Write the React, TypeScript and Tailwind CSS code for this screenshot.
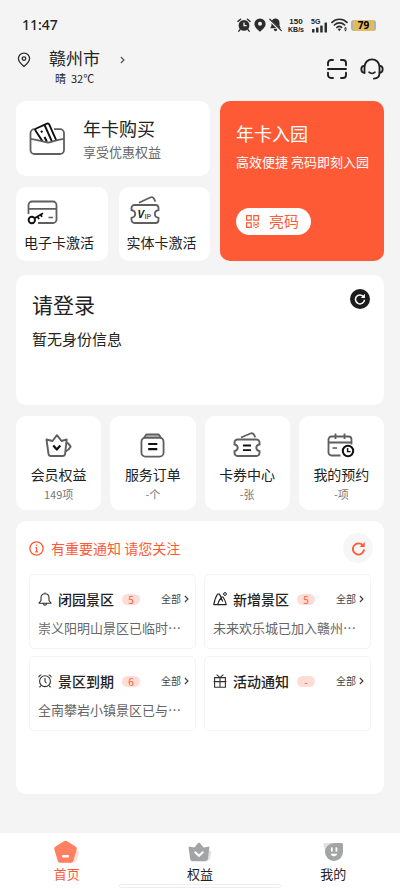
import React from 'react';

type IconProps = { className?: string };

const STROKE = '#5f5f5f';

/* ---------- ステータスバー ---------- */

const StatusAlarm = () => (
    <svg width="14" height="14" viewBox="0 0 14 14" fill="none">
        <circle cx="7" cy="7.4" r="5.4" fill="#2d2d2d" />
        <path d="M1 3.4 3.6 1.2M13 3.4 10.4 1.2M3 11.6l-1.2 1.6M11 11.6l1.2 1.6" stroke="#2d2d2d" strokeWidth="1.4" strokeLinecap="round" />
        <path d="M7 4.4v3.3h2.6" stroke="#f4f4f4" strokeWidth="1.3" />
    </svg>
);

const StatusPin = () => (
    <svg width="12" height="14" viewBox="0 0 12 14">
        <path d="M6 .4A5.6 5.6 0 0 0 .4 5.9C.4 9 3.6 11.4 6 13.7 8.4 11.4 11.6 9 11.6 5.9A5.6 5.6 0 0 0 6 .4Z" fill="#2d2d2d" />
        <circle cx="6" cy="5.7" r="2" fill="#f4f4f4" />
    </svg>
);

const StatusMute = () => (
    <svg width="13" height="14" viewBox="0 0 13 14" fill="none">
        <path d="M6.5.5C4 .5 2.500 2.300 2.500 4.700v3L1.200 10.200h10.600L10.500 7.700v-3C10.500 2.300 9 .5 6.500.5ZM4.800 11h3.400c-.2 1.500-.8 2.200-1.700 2.200S5 12.500 4.800 11Z" fill="#2d2d2d" />
        <path d="M.6 2 12 13" stroke="#f4f4f4" strokeWidth="2.4" />
        <path d="M.8 1.2 12.4 12.6" stroke="#2d2d2d" strokeWidth="1.2" strokeLinecap="round" />
    </svg>
);

const StatusWifi = () => (
    <svg width="17" height="14" viewBox="0 0 17 14" fill="none">
        <path d="M1 4.400c4-4.200 11-4.200 15 0M3.400 7c2.800-2.900 7.400-2.900 10.200 0M5.900 9.500c1.300-1.300 3.400-1.300 4.700-.2" stroke="#2d2d2d" strokeWidth="1.7" strokeLinecap="round" />
        <path d="M6.600 11.100 8.400 13.200l1.700-2.100c-1-.8-2.500-.8-3.500 0Z" fill="#2d2d2d" />
        <path d="M14.500 8.800 16 10.800h-3ZM14.500 13.400l-1.500-2h3Z" fill="#2d2d2d" />
    </svg>
);

const StatusBar = () => (
    <div className="flex h-[50px] items-center justify-between pr-6 pl-[22px]">
        <span className="font-['Noto_Sans'] text-[14px] leading-5 font-medium">11:47</span>
        <div className="flex items-center gap-[3px]">
            <StatusAlarm />
            <StatusPin />
            <StatusMute />
            <div className="ml-[3px] flex w-4 flex-col items-center font-['Liberation_Sans'] font-bold">
                <span className="text-[8px] leading-[9px]">150</span>
                <span className="text-[7px] leading-[8px]">KB/s</span>
            </div>
            <div className="relative ml-1 h-[15px] w-[17px]">
                <span className="absolute top-0 left-0 font-['Liberation_Sans'] text-[7px] leading-[7px] font-bold">5G</span>
                <svg className="h-full w-full" viewBox="0 0 17 15" fill="#2d2d2d">
                    <rect x="1" y="11" width="2.5" height="3.5" rx=".6" />
                    <rect x="5" y="9.5" width="2.5" height="5" rx=".6" />
                    <rect x="9.2" y="7.5" width="2.5" height="7" rx=".6" />
                    <rect x="13.5" y="4.5" width="2.5" height="10" rx=".6" />
                </svg>
            </div>
            <StatusWifi />
            <span className="flex h-[11px] w-[25px] items-center justify-center rounded-[3px] border-x-2 border-[#b5b2a8] bg-[#e0bb5f] font-['Noto_Sans'] text-[10px] leading-[11px] font-bold text-black">
                79
            </span>
        </div>
    </div>
);

/* ---------- アイコン ---------- */

const PinIcon = () => (
    <svg width="14" height="16" viewBox="0 0 14 16" fill="none" stroke="#2b2b2b" strokeWidth="1.3">
        <path d="M7 1.200c-3.200 0-5.600 2.300-5.600 5.300 0 3.300 3 5.700 5.600 8 2.600-2.300 5.600-4.700 5.600-8 0-3-2.400-5.300-5.600-5.300Z" />
        <circle cx="7" cy="6.6" r="1.8" />
    </svg>
);

const Chevron = ({ className }: IconProps) => (
    <svg className={className} viewBox="0 0 6 10" fill="none" stroke="currentColor" strokeWidth="1.5">
        <path d="M1 1.200 4.800 5 1 8.800" />
    </svg>
);

const ScanIcon = () => (
    <svg width="20" height="20" viewBox="0 0 20 20" fill="none" stroke="#202020" strokeWidth="1.9" strokeLinecap="round">
        <path d="M1 6.200V4a3 3 0 0 1 3-3h2M14 1h2a3 3 0 0 1 3 3v2.200M19 13.800V16a3 3 0 0 1-3 3h-2M6 19H4a3 3 0 0 1-3-3v-2.200M1 10h18" />
    </svg>
);

const HeadsetIcon = () => (
    <svg width="24" height="22" viewBox="0 0 24 22" fill="none" stroke="#202020" strokeWidth="1.8" strokeLinecap="round" strokeLinejoin="round">
        <path d="M4.500 14.800V8.800a7.500 7.500 0 0 1 15 0v6.400c0 3.500-2 5.200-5.600 5.400" />
        <path d="M4.500 7.600c-1.900.2-3.200 1.200-3.200 3.600s1.300 3.400 3.200 3.600M19.500 7.600c1.900.2 3.200 1.200 3.200 3.600s-1.300 3.400-3.200 3.600" />
        <path d="M9 14.200c1.600 1.500 4.400 1.500 6 0" strokeWidth="1.6" />
    </svg>
);

const WalletIcon = () => (
    <svg width="37" height="34" viewBox="0 0 37 34" fill="none">
        <path d="M6.500 7.200h-1A4 4 0 0 0 1.500 11.200V28a4 4 0 0 0 4 4H31a4 4 0 0 0 4-4V11.200a4 4 0 0 0-4-4h-6" stroke={STROKE} strokeWidth="1.8" />
        <path d="M13.500 19 6.600 8.800c-.6-.9-.4-1.800.6-2.300L18 1.600c.9-.4 1.700-.1 2.200.8l7.300 16.400-9 2.400Z" fill="#fff" />
        <path d="M13.500 19.200 6.600 8.800c-.6-.9-.4-1.800.6-2.300L18 1.600c.9-.4 1.700-.1 2.200.8l7.300 16.400M15.800 3.500l7.200 16.200" stroke="#111" strokeWidth="1.900" />
        <path d="m12.200 8.800 1 1.800M15.500 15l2.400 4.800" stroke="#111" strokeWidth="2" />
        <path d="M1.500 16.800c6 .6 10.500 2.400 17.500 3.800 6-1.400 10-3.200 16-3.800" stroke={STROKE} strokeWidth="1.8" />
    </svg>
);

const CardKeyIcon = () => (
    <svg width="31" height="25" viewBox="0 0 31 25" fill="none">
        <path d="M1.500 14V5a3.500 3.500 0 0 1 3.500-3.500h21A3.500 3.500 0 0 1 29.500 5v14.500A3.500 3.500 0 0 1 26 23H11M1.500 8.800h28" stroke={STROKE} strokeWidth="1.8" />
        <path d="M21.500 17.500h4.500" stroke={STROKE} strokeWidth="1.5" />
        <circle cx="4.8" cy="20" r="3.2" stroke="#111" strokeWidth="1.9" />
        <path d="m7.500 18.200 8.500-5M10.500 16.500l1.500 2.600M13.600 14.500l1.300 2.400" stroke="#111" strokeWidth="1.8" />
    </svg>
);

const VipIcon = () => (
    <svg width="31" height="29" viewBox="0 0 31 29" fill="none">
        <path d="M9 6.800 20.200 1.500c1.600-.7 2.900-.3 3.800 1.200l1.400 3" stroke={STROKE} strokeWidth="1.8" />
        <path d="M4.500 9h21a3 3 0 0 1 3 3v2.200c-2.500.5-3.700 1.800-3.700 3.800s1.200 3.300 3.700 3.800V24a3 3 0 0 1-3 3h-21a3 3 0 0 1-3-3v-2.200c2.500-.5 3.700-1.800 3.700-3.800s-1.200-3.300-3.700-3.800V12a3 3 0 0 1 3-3Z" stroke={STROKE} strokeWidth="1.8" />
        <text x="7.5" y="22" fontFamily="Liberation Sans" fontWeight="bold" fontStyle="italic" fontSize="10" fill="#111">V</text>
        <text x="14.5" y="22.5" fontFamily="Liberation Sans" fontWeight="bold" fontSize="7" fill={STROKE}>IP</text>
    </svg>
);

const QrIcon = () => (
    <svg width="13" height="13" viewBox="0 0 13 13" fill="none" stroke="#ff5a36" strokeWidth="1.2">
        <path d="M.6.6h4.600v4.600H.6ZM7.800.6h4.600v4.600H7.800ZM.6 7.800h4.600v4.600H.6Z" />
        <path d="M7.200 7.800h2M10.800 7.800h2M9 9.600h2M7.200 11h1.600M10.800 11.200h2M9 12.600h1.800M8 9v1.200M12.200 8.500v1.300" />
    </svg>
);

const ReloadIcon = ({ className }: IconProps) => (
    <svg className={className} viewBox="0 0 16 16" fill="none" stroke="currentColor">
        <path d="M13 5.200A6 6 0 1 0 14 9" strokeWidth="2" />
        <path d="M14.600 1v5.500H9.200Z" fill="currentColor" stroke="none" />
    </svg>
);

const CrownCup = () => (
    <svg width="28" height="25" viewBox="0 0 28 25" fill="none" strokeLinejoin="round">
        <path d="M1.500 6.500 7.500 8 12 2.200 16.500 8l5.200-1.500-1.600 14.300a2.500 2.500 0 0 1-2.500 2.200H6a2.500 2.500 0 0 1-2.500-2.200Z" stroke={STROKE} strokeWidth="1.9" />
        <path d="M21.500 9.500c1 .2 2.200 1.300 4.200 4-1.400 2.600-3 4-5 5" stroke={STROKE} strokeWidth="1.9" />
        <path d="m8.300 12.500 3.500 4 3.500-4" stroke="#111" strokeWidth="2.2" />
    </svg>
);

const OrderIcon = () => (
    <svg width="25" height="25" viewBox="0 0 26 26" fill="none">
        <path d="M6.500 1.500h13l3 4.500h-19Z" fill="#aaa" stroke={STROKE} strokeWidth="1.8" strokeLinejoin="round" />
        <rect x="1.500" y="5" width="23" height="19.5" rx="4" fill="#fff" stroke={STROKE} strokeWidth="1.9" />
        <path d="M8.500 11.500h9.500M8.500 16.800h9.500" stroke="#111" strokeWidth="2.2" />
    </svg>
);

const CouponIcon = () => (
    <svg width="28" height="26" viewBox="0 0 28 26" fill="none">
        <path d="M8 5.500 17.500 1.500c1.500-.6 2.600-.2 3.400 1l1.400 2.800" stroke={STROKE} strokeWidth="1.8" />
        <path d="M4.500 7.500h19a3 3 0 0 1 3 3v2c-2.200.4-3.200 1.600-3.200 3.300s1 2.900 3.200 3.300V21a3 3 0 0 1-3 3h-19a3 3 0 0 1-3-3v-1.900c2.200-.4 3.200-1.600 3.200-3.300s-1-2.900-3.200-3.300v-2a3 3 0 0 1 3-3Z" stroke={STROKE} strokeWidth="1.9" />
        <path d="M10 13.500h8M10 18.200h8" stroke="#111" strokeWidth="1.8" />
    </svg>
);

const BookingIcon = () => (
    <svg width="28" height="25" viewBox="0 0 28 25" fill="none">
        <path d="M13.500 22.500H4.500a3 3 0 0 1-3-3V6.500a3 3 0 0 1 3-3h17a3 3 0 0 1 3 3v5M1.500 9.500h23M8.500.5v5.500M17.500.5v5.500" stroke={STROKE} strokeWidth="1.8" />
        <path d="M5.500 15h4.500" stroke={STROKE} strokeWidth="1.6" />
        <circle cx="21" cy="18" r="5.2" stroke="#111" strokeWidth="2" />
        <path d="M20.600 15v3.600h3" stroke="#111" strokeWidth="1.4" />
    </svg>
);

const InfoIcon = () => (
    <svg width="15" height="15" viewBox="0 0 15 15" fill="none" stroke="#ff5a36">
        <circle cx="7.5" cy="7.5" r="6.6" strokeWidth="1.3" />
        <path d="M7.500 3.600v1.500M6.400 6.700h1.200v4M6.200 10.900h2.800" strokeWidth="1.2" />
    </svg>
);

const BellIcon = () => (
    <svg width="14" height="14" viewBox="0 0 14 14" fill="none" stroke="#333" strokeWidth="1.1" strokeLinejoin="round">
        <path d="M7 1.700c-2.500 0-4 1.800-4 4.100v2.700L1 11.200h12L11 8.500V5.800c0-2.300-1.500-4.100-4-4.100ZM7 .4v1.300M5.300 11.400c.2 1.300.8 1.900 1.700 1.900s1.500-.6 1.700-1.900" />
    </svg>
);

const MountainIcon = () => (
    <svg width="14" height="14" viewBox="0 0 14 14" fill="none" stroke="#222" strokeWidth="1.2" strokeLinejoin="round">
        <path d="M4.600 12.600H.8C1.600 8 2.800 4.600 4.600 2h1.600c1 1 1.500 2.200 1.900 3.600M4.600 12.600h8.600C12.600 9.600 11.600 7.200 10 5H8.800c-2 2-3.200 4.600-4.200 7.600ZM8.200 6.200l1.600 3.200" />
        <circle cx="12" cy="2" r="1.400" strokeWidth="1" />
    </svg>
);

const ClockIcon = () => (
    <svg width="14" height="14" viewBox="0 0 14 14" fill="none" stroke="#333" strokeWidth="1.1">
        <circle cx="7" cy="7.2" r="5.4" />
        <path d="M7 4v3.600l1.500 1.600M.6 3.400C1 2 2 1 3.300.7M13.400 3.400C13 2 12 1 10.700.7M2.800 11.600l-1.300 1.700M11.200 11.600l1.300 1.700" />
    </svg>
);

const GiftIcon = () => (
    <svg width="14" height="14" viewBox="0 0 14 14" fill="none" stroke="#333" strokeWidth="1.1">
        <path d="M1.600 3.600h10.800v9.600H1.600ZM.6 7.600h12.800M7 3.600v9.600M3.600.6 7 3.600 10.400.6" />
    </svg>
);

const HomeTabIcon = () => (
    <svg width="26" height="24" viewBox="0 0 26 24">
        <path d="M15 11h8.500c1.500 0 2 1 1.700 2.200l-2.600 7.600c-.3 1-.9 1.600-2 1.600H14Z" fill="#ffe3d6" />
        <path d="M9.500 1.500c1.400-.9 2.600-.9 4 0l8 5c1.200.8 1.600 1.800 1.200 3.200l-3.400 11c-.4 1.400-1.300 2-2.700 2H6.400c-1.400 0-2.300-.6-2.700-2L.4 9.700C0 8.300.4 7.300 1.500 6.500Z" fill="#ff7f63" />
        <rect x="8" y="15" width="7" height="2.600" rx="1" fill="#fff" />
    </svg>
);

const CrownTabIcon = () => (
    <svg width="24" height="20" viewBox="0 0 24 20" fill="none">
        <path d="M16 9h7.500l-1.600 7.500c-.3 1.400-1 2-2.400 2H15Z" fill="#e2e2e2" />
        <path d="M.5 4.500 6.500 5.500l3.600-4.600c.6-.7 1.200-.7 1.800 0l3.600 4.600 6-1-1.600 12.200c-.2 1.600-1.100 2.500-2.700 2.500H4.800c-1.600 0-2.500-.9-2.700-2.500Z" fill="#a3a4a6" />
        <path d="m7.200 10.200 3.800 3.600 3.800-3.600" stroke="#fff" strokeWidth="2" strokeLinecap="round" />
    </svg>
);

const FaceTabIcon = () => (
    <svg width="21" height="20" viewBox="0 0 21 20" fill="none">
        <path d="M.5 1h9v9H3C1.300 7.400.5 4.500.5 1Z" fill="#e2e2e2" />
        <path d="M11 1h7.500c.9 0 1.500.6 1.500 1.500V10a9 9 0 1 1-9-9Z" fill="#a3a4a6" />
        <path d="M8.800 6.200v2.600M13.400 6.200v2.600" stroke="#fff" strokeWidth="1.8" strokeLinecap="round" />
        <path d="M7.800 11.700h6.400c-.6 1.800-1.700 2.600-3.200 2.600s-2.600-.8-3.200-2.600Z" fill="#fff" />
    </svg>
);

/* ---------- データ ---------- */

const shortcuts = [
    { label: '会员权益', count: '149项', icon: <CrownCup /> },
    { label: '服务订单', count: '-个', icon: <OrderIcon /> },
    { label: '卡券中心', count: '-张', icon: <CouponIcon /> },
    { label: '我的预约', count: '-项', icon: <BookingIcon /> },
];

const notices = [
    { title: '闭园景区', count: '5', text: '崇义阳明山景区已临时…', icon: <BellIcon /> },
    { title: '新增景区', count: '5', text: '未来欢乐城已加入赣州…', icon: <MountainIcon /> },
    { title: '景区到期', count: '6', text: '全南攀岩小镇景区已与…', icon: <ClockIcon /> },
    { title: '活动通知', count: '-', text: '', icon: <GiftIcon /> },
];

const tabs = [
    { label: '首页', icon: <HomeTabIcon />, active: true },
    { label: '权益', icon: <CrownTabIcon />, active: false },
    { label: '我的', icon: <FaceTabIcon />, active: false },
];

export default function App() {
    return (
        <div lang="zh-CN" className="flex min-h-screen flex-col bg-[#f4f4f4] font-['Noto_Sans_CJK_SC',sans-serif] text-[#222]">
            <StatusBar />

            {/* 都市と天気 */}
            <header className="flex h-[51px] items-start justify-between pr-4 pl-[17px]">
                <div className="flex items-start">
                    <div className="pt-[2px]">
                        <PinIcon />
                    </div>
                    <div className="ml-[18px]">
                        <button type="button" className="flex items-center gap-5 font-['Liberation_Sans','Noto_Sans_CJK_SC',sans-serif] text-[17px] leading-5">
                            赣州市
                            <Chevron className="h-2 w-[5px] text-[#555]" />
                        </button>
                        <p className="pl-[6px] text-[11px] leading-[17px]">晴&nbsp; 32℃</p>
                    </div>
                </div>
                <div className="flex items-center gap-[13px] pt-2">
                    <button type="button" aria-label="扫一扫">
                        <ScanIcon />
                    </button>
                    <button type="button" aria-label="客服">
                        <HeadsetIcon />
                    </button>
                </div>
            </header>

            <main className="flex flex-col px-4">
                {/* 年間カード */}
                <section className="grid grid-cols-[194fr_164fr] gap-[10px]">
                    <div className="flex flex-col gap-[11px]">
                        <button type="button" className="flex h-[75px] items-center gap-[17px] rounded-[10px] bg-white pl-[13px] text-left">
                            <WalletIcon />
                            <span className="flex flex-col gap-[2px]">
                                <span className="text-[18px] leading-6">年卡购买</span>
                                <span className="text-[13px] leading-5 text-[#666]">享受优惠权益</span>
                            </span>
                        </button>
                        <div className="grid grid-cols-2 gap-[11px]">
                            <button type="button" className="flex h-[74px] flex-col items-start justify-end rounded-[10px] bg-white pb-[9px] pl-2">
                                <span className="ml-[3px]">
                                    <CardKeyIcon />
                                </span>
                                <span className="mt-[7px] text-[14px] leading-5 whitespace-nowrap">电子卡激活</span>
                            </button>
                            <button type="button" className="flex h-[74px] flex-col items-start justify-end rounded-[10px] bg-white pb-[9px] pl-2">
                                <span className="ml-[3px]">
                                    <VipIcon />
                                </span>
                                <span className="mt-[7px] text-[14px] leading-5 whitespace-nowrap">实体卡激活</span>
                            </button>
                        </div>
                    </div>
                    <div className="flex flex-col items-start rounded-[10px] bg-[#ff5a36] pt-5 pl-4 text-white">
                        <h2 className="text-[18px] leading-6">年卡入园</h2>
                        <p className="mt-[7px] text-[13px] leading-5 whitespace-nowrap">高效便捷 亮码即刻入园</p>
                        <button type="button" className="mt-9 flex h-[27px] items-center gap-[10px] rounded-full bg-white pr-3 pl-[10px] text-[15px] text-[#ff5a36]">
                            <QrIcon />
                            亮码
                        </button>
                    </div>
                </section>

                {/* ログイン */}
                <section className="mt-[14px] flex h-[130px] items-start justify-between rounded-[10px] bg-white pt-[14px] pr-[14px] pl-4">
                    <div>
                        <h2 className="text-[21px] leading-[30px]">请登录</h2>
                        <p className="mt-2 text-[15px] leading-6">暂无身份信息</p>
                    </div>
                    <button type="button" aria-label="刷新" className="flex size-5 items-center justify-center rounded-full bg-[#1c1c1c] text-white">
                        <ReloadIcon className="size-3" />
                    </button>
                </section>

                <section className="mt-[11px] grid grid-cols-4 gap-[9px]">
                    {shortcuts.map((item) => (
                        <button key={item.label} type="button" className="flex h-[94px] flex-col items-center rounded-[10px] bg-white pt-4">
                            <span className="flex h-[26px] items-center">{item.icon}</span>
                            <span className="mt-[6px] text-[14px] leading-5">{item.label}</span>
                            <span className="mt-[2px] text-[11px] leading-4 text-[#777]">{item.count}</span>
                        </button>
                    ))}
                </section>

                {/* お知らせ */}
                <section className="mt-[11px] rounded-[10px] bg-white px-[13px] pt-3 pb-[63px]">
                    <div className="flex h-[30px] items-center justify-between text-[#ff5a36]">
                        <h2 className="flex items-center gap-[7px] text-[14px]">
                            <InfoIcon />
                            有重要通知 请您关注
                        </h2>
                        <button type="button" aria-label="刷新通知" className="-mr-[2px] flex size-[30px] items-center justify-center rounded-full bg-[#f6f6f6]">
                            <ReloadIcon className="size-[15px]" />
                        </button>
                    </div>
                    <div className="mt-[11px] grid grid-cols-2 gap-x-2 gap-y-[7px]">
                        {notices.map((item) => (
                            <article key={item.title} className="h-[75px] min-w-0 rounded-[5px] border border-[#f4f4f4] pt-[15px] pr-[6px] pl-2">
                                <div className="flex items-center">
                                    {item.icon}
                                    <h3 className="ml-[6px] text-[14px] leading-[18px] font-medium text-[#222]">{item.title}</h3>
                                    <span className="ml-2 flex h-[11px] w-[18px] items-center justify-center rounded-full bg-[#ffdcd5] text-[10px] leading-[11px] text-[#ff5a36]">
                                        {item.count}
                                    </span>
                                    <a href="#" className="ml-auto flex items-center gap-[3px] text-[10px] leading-4 text-[#444]">
                                        全部
                                        <Chevron className="h-2 w-[5px]" />
                                    </a>
                                </div>
                                <p className="mt-[10px] text-[13px] leading-5 whitespace-nowrap text-[#666]">{item.text}</p>
                            </article>
                        ))}
                    </div>
                </section>
            </main>

            {/* 下部タブ */}
            <nav className="relative mt-auto grid h-14 grid-cols-3 bg-white">
                {tabs.map((tab) => (
                    <a
                        key={tab.label}
                        href="#"
                        className={`flex flex-col items-center pt-[6px] text-[13px] leading-[18px] ${tab.active ? 'text-[#ff5a36]' : 'text-[#222]'}`}
                    >
                        <span className="flex h-[26px] items-center">{tab.icon}</span>
                        {tab.label}
                    </a>
                ))}
                <span className="absolute bottom-px left-1/2 h-1 w-[162px] -translate-x-1/2 rounded-full border border-[#eee] bg-white" />
            </nav>
        </div>
    );
}
